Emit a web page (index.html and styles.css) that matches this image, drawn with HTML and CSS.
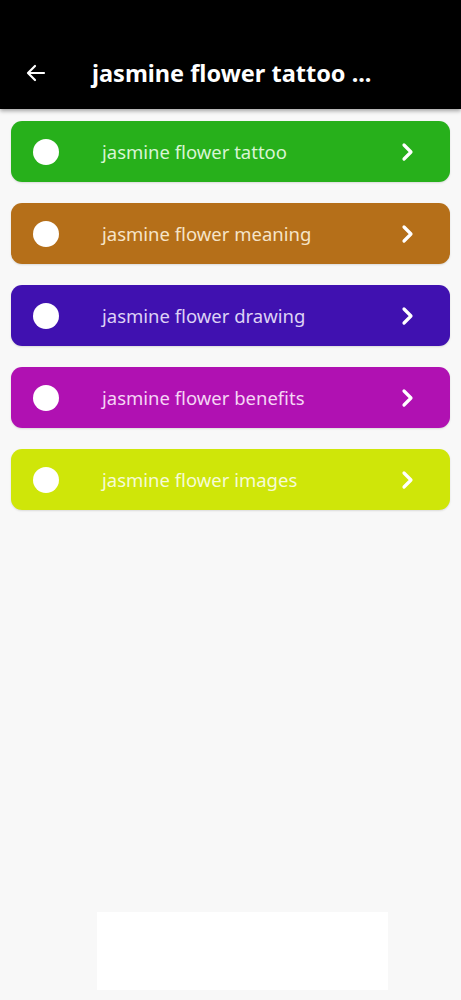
FILE: index.html
```html
<!DOCTYPE html>
<html>
<head>
<meta charset="utf-8">
<link rel="stylesheet" href="styles.css">
</head>
<body>
<header class="appbar">
  <svg class="back" width="24" height="24" viewBox="0 0 24 24"><path d="M20 12H5M11 5l-7 7 7 7" fill="none" stroke="#fff" stroke-width="2.2" stroke-linecap="round" stroke-linejoin="round"/></svg>
  <h1 class="title">jasmine flower tattoo ...</h1>
</header>
<main class="list">
  <div class="item green"><span class="dot"></span><span class="label">jasmine flower tattoo</span><svg class="chev" width="14" height="20" viewBox="0 0 14 20"><path d="M3 3l7 7-7 7" fill="none" stroke="#fff" stroke-width="3.2" stroke-linecap="round" stroke-linejoin="round"/></svg></div>
  <div class="item brown"><span class="dot"></span><span class="label">jasmine flower meaning</span><svg class="chev" width="14" height="20" viewBox="0 0 14 20"><path d="M3 3l7 7-7 7" fill="none" stroke="#fff" stroke-width="3.2" stroke-linecap="round" stroke-linejoin="round"/></svg></div>
  <div class="item purple"><span class="dot"></span><span class="label">jasmine flower drawing</span><svg class="chev" width="14" height="20" viewBox="0 0 14 20"><path d="M3 3l7 7-7 7" fill="none" stroke="#fff" stroke-width="3.2" stroke-linecap="round" stroke-linejoin="round"/></svg></div>
  <div class="item magenta"><span class="dot"></span><span class="label">jasmine flower benefits</span><svg class="chev" width="14" height="20" viewBox="0 0 14 20"><path d="M3 3l7 7-7 7" fill="none" stroke="#fff" stroke-width="3.2" stroke-linecap="round" stroke-linejoin="round"/></svg></div>
  <div class="item lime"><span class="dot"></span><span class="label">jasmine flower images</span><svg class="chev" width="14" height="20" viewBox="0 0 14 20"><path d="M3 3l7 7-7 7" fill="none" stroke="#fff" stroke-width="3.2" stroke-linecap="round" stroke-linejoin="round"/></svg></div>
</main>
<div class="ad"></div>
</body>
</html>
```
FILE: styles.css
```css
html, body {
  margin: 0;
  padding: 0;
}
body {
  width: 461px;
  height: 1000px;
  background: #f8f8f8;
  font-family: "Noto Sans", "Open Sans", sans-serif;
  display: flex;
  flex-direction: column;
  overflow: hidden;
}
.appbar {
  height: 109px;
  background: #000;
  display: flex;
  align-items: flex-end;
  padding: 0 0 20px 24px;
  box-sizing: border-box;
  box-shadow: 0 2px 4px rgba(0,0,0,0.35);
  position: relative;
  z-index: 1;
}
.back {
  display: block;
  margin-bottom: 4px;
}
.title {
  margin: 0 0 0 44px;
  color: #fff;
  font-size: 23.5px;
  font-weight: 700;
  letter-spacing: 0;
  line-height: 32px;
}
.list {
  display: flex;
  flex-direction: column;
  gap: 21px;
  padding: 12px 11px 0 11px;
}
.item {
  height: 61px;
  border-radius: 11px;
  display: flex;
  align-items: center;
  padding: 0 35px 0 22px;
  box-shadow: 0 1px 2px rgba(0,0,0,0.12);
}
.dot {
  width: 26px;
  height: 26px;
  border-radius: 50%;
  background: #fff;
  flex: none;
}
.label {
  margin-left: 43px;
  flex: 1;
  font-size: 18.5px;
  font-weight: 400;
  letter-spacing: 0;
}
.chev { flex: none; }
.green { background: #27b01b; }
.green .label { color: #d8f5d4; }
.brown { background: #b56f19; }
.brown .label { color: #f6e4c8; }
.purple { background: #4011b0; }
.purple .label { color: #ddd2f5; }
.magenta { background: #b011b2; }
.magenta .label { color: #f5d5f5; }
.lime { background: #cfe609; }
.lime .label { color: #f6fbd5; }
.ad {
  margin: auto 0 10px 97px;
  width: 291px;
  height: 78px;
  background: #fff;
}
```
